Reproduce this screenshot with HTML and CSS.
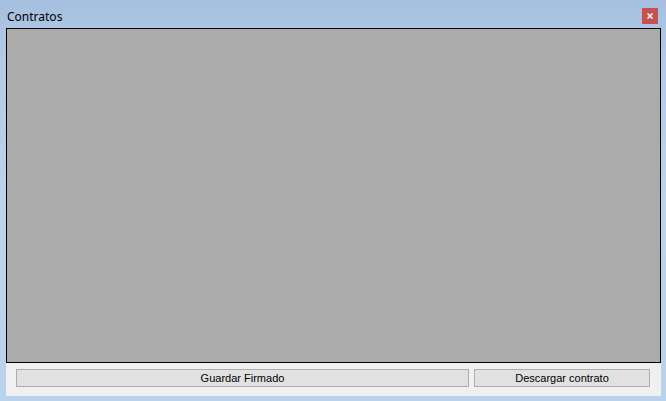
FILE: index.html
```html
<!DOCTYPE html>
<html lang="es">
<head>
<meta charset="utf-8">
<title>Contratos</title>
<link rel="stylesheet" href="styles.css">
</head>
<body>
<div class="window">
  <div class="titlebar">
    <span class="title">Contratos</span>
    <span class="close">
      <svg width="6" height="6" viewBox="0 0 6 6"><path d="M0.5 0.5L5.5 5.5M5.5 0.5L0.5 5.5" stroke="#fff" stroke-width="1.5"/></svg>
    </span>
  </div>
  <div class="client">
    <div class="viewer"></div>
    <div class="actions">
      <button class="btn btn-save">Guardar Firmado</button>
      <button class="btn btn-download">Descargar contrato</button>
    </div>
  </div>
</div>
</body>
</html>
```
FILE: styles.css
```css
html, body {
  margin: 0;
  padding: 0;
}
body {
  width: 666px;
  height: 401px;
  overflow: hidden;
}
.window {
  width: 666px;
  height: 401px;
  background: linear-gradient(to bottom, #a5c0df 0px, #b2cae6 60px, #bcd3ec 200px, #bad2ec 401px);
  display: flex;
  flex-direction: column;
  padding: 0 5px 5px 6px;
  box-sizing: border-box;
}
.titlebar {
  height: 28px;
  display: flex;
  align-items: flex-start;
  justify-content: space-between;
  flex-shrink: 0;
}
.title {
  font-family: "Noto Sans", "Open Sans", sans-serif;
  font-size: 12px;
  color: #000;
  margin-top: 9px;
  margin-left: 1px;
  line-height: 16px;
}
.close {
  width: 16px;
  height: 16px;
  margin-top: 8px;
  margin-right: 3px;
  background: #c75050;
  display: flex;
  align-items: center;
  justify-content: center;
}
.close svg { display: block; }
.client {
  flex: 1;
  background: #f0f0f0;
  display: flex;
  flex-direction: column;
}
.viewer {
  height: 335px;
  background: #ababab;
  border: 1px solid #000;
  box-sizing: border-box;
}
.actions {
  display: flex;
  gap: 5px;
  padding: 6px 11px 0 10px;
}
.btn {
  height: 18px;
  margin: 0;
  padding: 0;
  background: #e1e1e1;
  border: 1px solid #adadad;
  box-sizing: border-box;
  font-family: "Liberation Sans", Arial, sans-serif;
  font-size: 11px;
  color: #000;
  line-height: 15px;
}
.btn-save { width: 453px; }
.btn-download { width: 176px; }
```
